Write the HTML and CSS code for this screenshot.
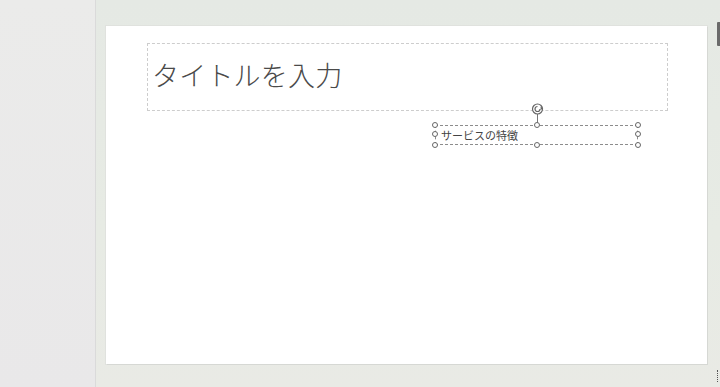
FILE: index.html
```html
<!DOCTYPE html>
<html lang="ja">
<head>
<meta charset="utf-8">
<link rel="stylesheet" href="styles.css">
</head>
<body>
<div class="app">
  <aside class="thumbs"></aside>
  <main class="stage">
    <div class="slide">
      <div class="ph title-ph"><span class="title-text">タイトルを入力</span></div>
      <div class="ph sub-ph">
        <span class="sub-text">サービスの特徴</span>
        <span class="rot-line"></span>
        <svg class="rot" width="14" height="14" viewBox="0 0 14 14">
          <circle cx="6.5" cy="7" r="5" fill="#fff" stroke="#666" stroke-width="1.2"/>
          <path d="M9 7 A2.5 2.5 0 1 1 6.5 4.5" fill="none" stroke="#666" stroke-width="1.2"/>
          <path d="M9.6 4.4 L9.6 8 L12.2 6.2 Z" fill="#666"/>
        </svg>
        <i class="h tl"></i><i class="h ml"></i><i class="h bl"></i>
        <i class="h tc"></i><i class="h bc"></i>
        <i class="h tr"></i><i class="h mr"></i><i class="h br"></i>
      </div>
    </div>
    <div class="scroll-thumb"></div>
    <div class="corner-glyph"></div>
  </main>
</div>
</body>
</html>
```
FILE: styles.css
```css
html, body {
  margin: 0;
  padding: 0;
  width: 720px;
  height: 387px;
  overflow: hidden;
  font-family: "Noto Sans CJK JP", "Noto Sans", sans-serif;
}
.app {
  display: flex;
  width: 720px;
  height: 387px;
}
.thumbs {
  width: 95px;
  flex: none;
  border-right: 1px solid #dadada;
  background: linear-gradient(180deg, #ebebea 0%, #e9e8e9 100%);
}
.stage {
  position: relative;
  flex: 1;
  padding: 26px 0 0 10px;
  background: linear-gradient(180deg, #e5e9e4 0%, #e7ebe4 60%, #e9eae5 100%);
}
.slide {
  position: relative;
  width: 601px;
  height: 338px;
  background: #fff;
  box-shadow: 1px 1px 0 #d6d8d4, 0 0 0 1px #e0e2de;
}
.ph {
  position: absolute;
  box-sizing: border-box;
}
.title-ph {
  left: 41px;
  top: 17px;
  width: 521px;
  height: 68px;
  border: 1px dashed #cdcdcd;
  display: flex;
  align-items: center;
  padding-left: 4px;
}
.title-text {
  font-size: 27px;
  font-weight: 300;
  color: #4a4a4a;
  letter-spacing: 0.2px;
  line-height: 1;
  margin-top: -6px;
}
.sub-ph {
  left: 329px;
  top: 99px;
  width: 203px;
  height: 20px;
  border: 1px dashed #8c8c8c;
  display: flex;
  align-items: center;
  padding-left: 5px;
}
.sub-text {
  font-size: 11px;
  color: #444;
  line-height: 1;
}
.rot-line {
  position: absolute;
  left: 101px;
  top: -13px;
  width: 1px;
  height: 13px;
  background: #777;
}
.rot {
  position: absolute;
  left: 95px;
  top: -24px;
}
.h {
  position: absolute;
  width: 6px;
  height: 6px;
  border: 1px solid #666;
  border-radius: 50%;
  background: #fff;
  box-sizing: border-box;
}
.tl { left: -4px; top: -4px; }
.ml { left: -4px; top: 5px; }
.bl { left: -4px; bottom: -4px; }
.tc { left: 98px; top: -4px; }
.bc { left: 98px; bottom: -4px; }
.tr { right: -4px; top: -4px; }
.mr { right: -4px; top: 5px; }
.br { right: -4px; bottom: -4px; }
.scroll-thumb {
  position: absolute;
  right: 0;
  top: 22px;
  width: 3px;
  height: 24px;
  background: #6a6a6a;
  border-radius: 1px 0 0 1px;
}
.corner-glyph {
  position: absolute;
  right: 0;
  top: 370px;
  width: 2px;
  height: 12px;
  border-left: 1px dotted #555;
}
```
